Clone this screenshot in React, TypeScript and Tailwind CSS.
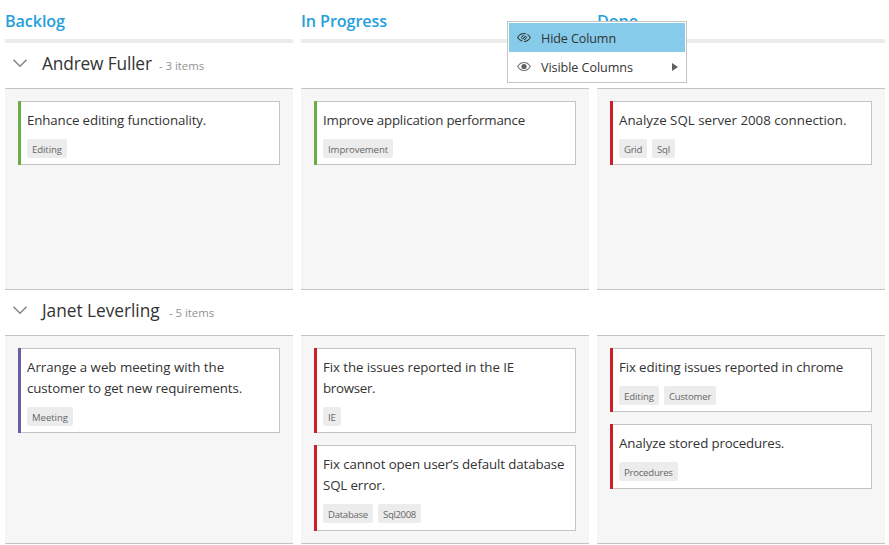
type Tag = { label: string; cls: string };
type CardData = { lines: [string, string][]; tags: Tag[]; accent: string; pad?: string };

const GREEN = "bg-[#66ae45]";
const RED = "bg-[#cb1f27]";
const PURPLE = "bg-[#6a5da8]";

const EDITING: Tag = { label: "Editing", cls: "w-[40px] tracking-[-0.09px]" };

const columns = [
  { title: "Backlog", cls: "tracking-[-0.11px]" },
  { title: "In Progress", cls: "tracking-[-0.11px]" },
  { title: "Done", cls: "tracking-[-0.1px]" },
];

const andrew: CardData[][] = [
  [{ accent: GREEN, lines: [["Enhance editing functionality.", "tracking-[-0.12px]"]], tags: [EDITING] }],
  [
    {
      accent: GREEN,
      lines: [["Improve application performance", "tracking-[-0.18px]"]],
      tags: [{ label: "Improvement", cls: "w-[70px] tracking-[-0.07px]" }],
    },
  ],
  [
    {
      accent: RED,
      lines: [["Analyze SQL server 2008 connection.", "tracking-normal"]],
      tags: [
        { label: "Grid", cls: "w-[28px] tracking-[-0.3px]" },
        { label: "Sql", cls: "w-[23px] tracking-[-0.17px]" },
      ],
    },
  ],
];

const janet: CardData[][] = [
  [
    {
      accent: PURPLE,
      lines: [
        ["Arrange a web meeting with the", "tracking-[-0.02px]"],
        ["customer to get new requirements.", "tracking-[-0.11px]"],
      ],
      tags: [{ label: "Meeting", cls: "w-[46px] tracking-[-0.06px]" }],
    },
  ],
  [
    {
      accent: RED,
      lines: [
        ["Fix the issues reported in the IE", "tracking-[-0.09px]"],
        ["browser.", "tracking-[-0.3px]"],
      ],
      tags: [{ label: "IE", cls: "w-[18px] tracking-[-0.1px]" }],
    },
    {
      accent: RED,
      pad: "pb-[7px]",
      lines: [
        ["Fix cannot open user\u2019s default database", "tracking-[-0.11px]"],
        ["SQL error.", "tracking-[-0.13px]"],
      ],
      tags: [
        { label: "Database", cls: "w-[50px] tracking-[-0.28px]" },
        { label: "Sql2008", cls: "w-[43px] tracking-[-0.36px]" },
      ],
    },
  ],
  [
    {
      accent: RED,
      lines: [["Fix editing issues reported in chrome", "tracking-[-0.13px]"]],
      tags: [EDITING, { label: "Customer", cls: "w-[52px] tracking-[-0.22px]" }],
    },
    {
      accent: RED,
      pad: "pb-[7px]",
      lines: [["Analyze stored procedures.", "tracking-[-0.15px]"]],
      tags: [{ label: "Procedures", cls: "w-[59px] tracking-[-0.24px]" }],
    },
  ],
];

function Card({ card }: { card: CardData }) {
  return (
    <div className="flex w-[262px]">
      <div className={`w-[3px] shrink-0 ${card.accent}`} />
      <div className={`flex-1 border border-l-0 border-[#c4c4c4] bg-white pt-2 pl-1.5 ${card.pad ?? "pb-1.5"}`}>
        {card.lines.map(([text, cls]) => (
          <div key={text} className={`h-[21px] text-[13.3px] leading-[21px] whitespace-nowrap text-[#333333] ${cls}`}>
            {text}
          </div>
        ))}
        <div className="mt-2 flex gap-[5px]">
          {card.tags.map((t) => (
            <span
              key={t.label}
              className={`h-[19px] rounded-[2px] bg-[#ececec] pl-[5px] text-[9.6px] leading-[21px] whitespace-nowrap text-[#676767] ${t.cls}`}
            >
              {t.label}
            </span>
          ))}
        </div>
      </div>
    </div>
  );
}

function Swimlane(props: {
  name: string;
  count: string;
  nameCls: string;
  bodyCls: string;
  cells: CardData[][];
}) {
  return (
    <section>
      <div className="flex h-[45px] pl-2">
        <svg width="15" height="9" viewBox="0 0 15 9" fill="none" className="mt-[16px] shrink-0">
          <path d="M0.5 0.7 L7 7.2 L13.5 0.7" stroke="#858585" strokeWidth="1.5" />
        </svg>
        <span className={`ml-[14px] text-[17.3px] leading-[42px] whitespace-nowrap text-[#333333] ${props.nameCls}`}>
          {props.name}
        </span>
        <span className="text-[11.4px] leading-[46px] tracking-[-0.04px] whitespace-nowrap text-[#929292]">
          {props.count}
        </span>
      </div>
      <div className="flex gap-2">
        {props.cells.map((cards, i) => (
          <div
            key={i}
            className={`flex w-[288px] flex-col gap-3 border-y border-[#c4c4c4] bg-[#f6f6f6] pt-3 pl-[13px] ${props.bodyCls}`}
          >
            {cards.map((c) => (
              <Card key={c.lines[0][0]} card={c} />
            ))}
          </div>
        ))}
      </div>
    </section>
  );
}

function ContextMenu() {
  return (
    <div className="absolute top-[21px] left-[507px] h-[62px] w-[180px] border border-[#c4c4c4] bg-white p-px text-[12.6px] text-[#333333]">
      <div className="flex h-[29px] items-center bg-[#86cbea] pl-2">
        <svg width="14" height="11" viewBox="0 0 15 11" fill="none" stroke="#333333">
          <path d="M5.8 9.4 C3.5 8.9 1.8 7.4 0.7 5.5 C2.3 2.8 4.6 1.2 7.5 1.2 C8.2 1.2 8.8 1.3 9.4 1.5 M11.1 2.2 C12.4 3 13.5 4.1 14.3 5.5 C12.7 8.2 10.4 9.8 7.5 9.8" strokeWidth="1.1" />
          <path d="M5 6.5 C4.8 4.6 5.7 3.3 7.6 3.2 M10 4.5 C10.3 6.4 9.3 7.8 7.4 7.8" strokeWidth="1" />
          <path d="M9.4 4 L5.8 7.2" strokeWidth="1.1" />
        </svg>
        <span className="ml-[10px] pt-[3px] tracking-[-0.12px] whitespace-nowrap">Hide Column</span>
      </div>
      <div className="flex h-[29px] items-center pl-2">
        <svg width="14" height="11" viewBox="0 0 15 11" fill="none">
          <path d="M0.7 5.5 C2.3 2.8 4.6 1.2 7.5 1.2 C10.4 1.2 12.7 2.8 14.3 5.5 C12.7 8.2 10.4 9.8 7.5 9.8 C4.6 9.8 2.3 8.2 0.7 5.5 Z" stroke="#707070" strokeWidth="1.2" />
          <circle cx="7.5" cy="5.5" r="2.8" fill="#606060" />
        </svg>
        <span className="ml-[10px] pt-[3px] tracking-[-0.07px] whitespace-nowrap">Visible Columns</span>
        <svg width="6" height="8" viewBox="0 0 6 8" className="mt-px mr-[7px] ml-auto">
          <path d="M0 0 L6 4 L0 8 Z" fill="#606060" />
        </svg>
      </div>
    </div>
  );
}

export default function App() {
  return (
    <div className="relative h-[545px] w-[889px] overflow-hidden bg-white pl-[5px] font-['Open_Sans','Noto_Sans',sans-serif]">
      <header className="flex gap-2">
        {columns.map((c) => (
          <div key={c.title} className="h-[43px] w-[288px] border-b-4 border-[#ebebeb]">
            <div className={`text-[16.2px] leading-[42px] font-semibold whitespace-nowrap text-[#269fdb] ${c.cls}`}>
              {c.title}
            </div>
          </div>
        ))}
      </header>
      <Swimlane
        name="Andrew Fuller"
        count="- 3 items"
        nameCls="w-[117px] tracking-[-0.15px]"
        bodyCls="h-[202px]"
        cells={andrew}
      />
      <Swimlane
        name="Janet Leverling"
        count="- 5 items"
        nameCls="w-[127px] tracking-[-0.03px]"
        bodyCls="h-[209px]"
        cells={janet}
      />
      <ContextMenu />
    </div>
  );
}
